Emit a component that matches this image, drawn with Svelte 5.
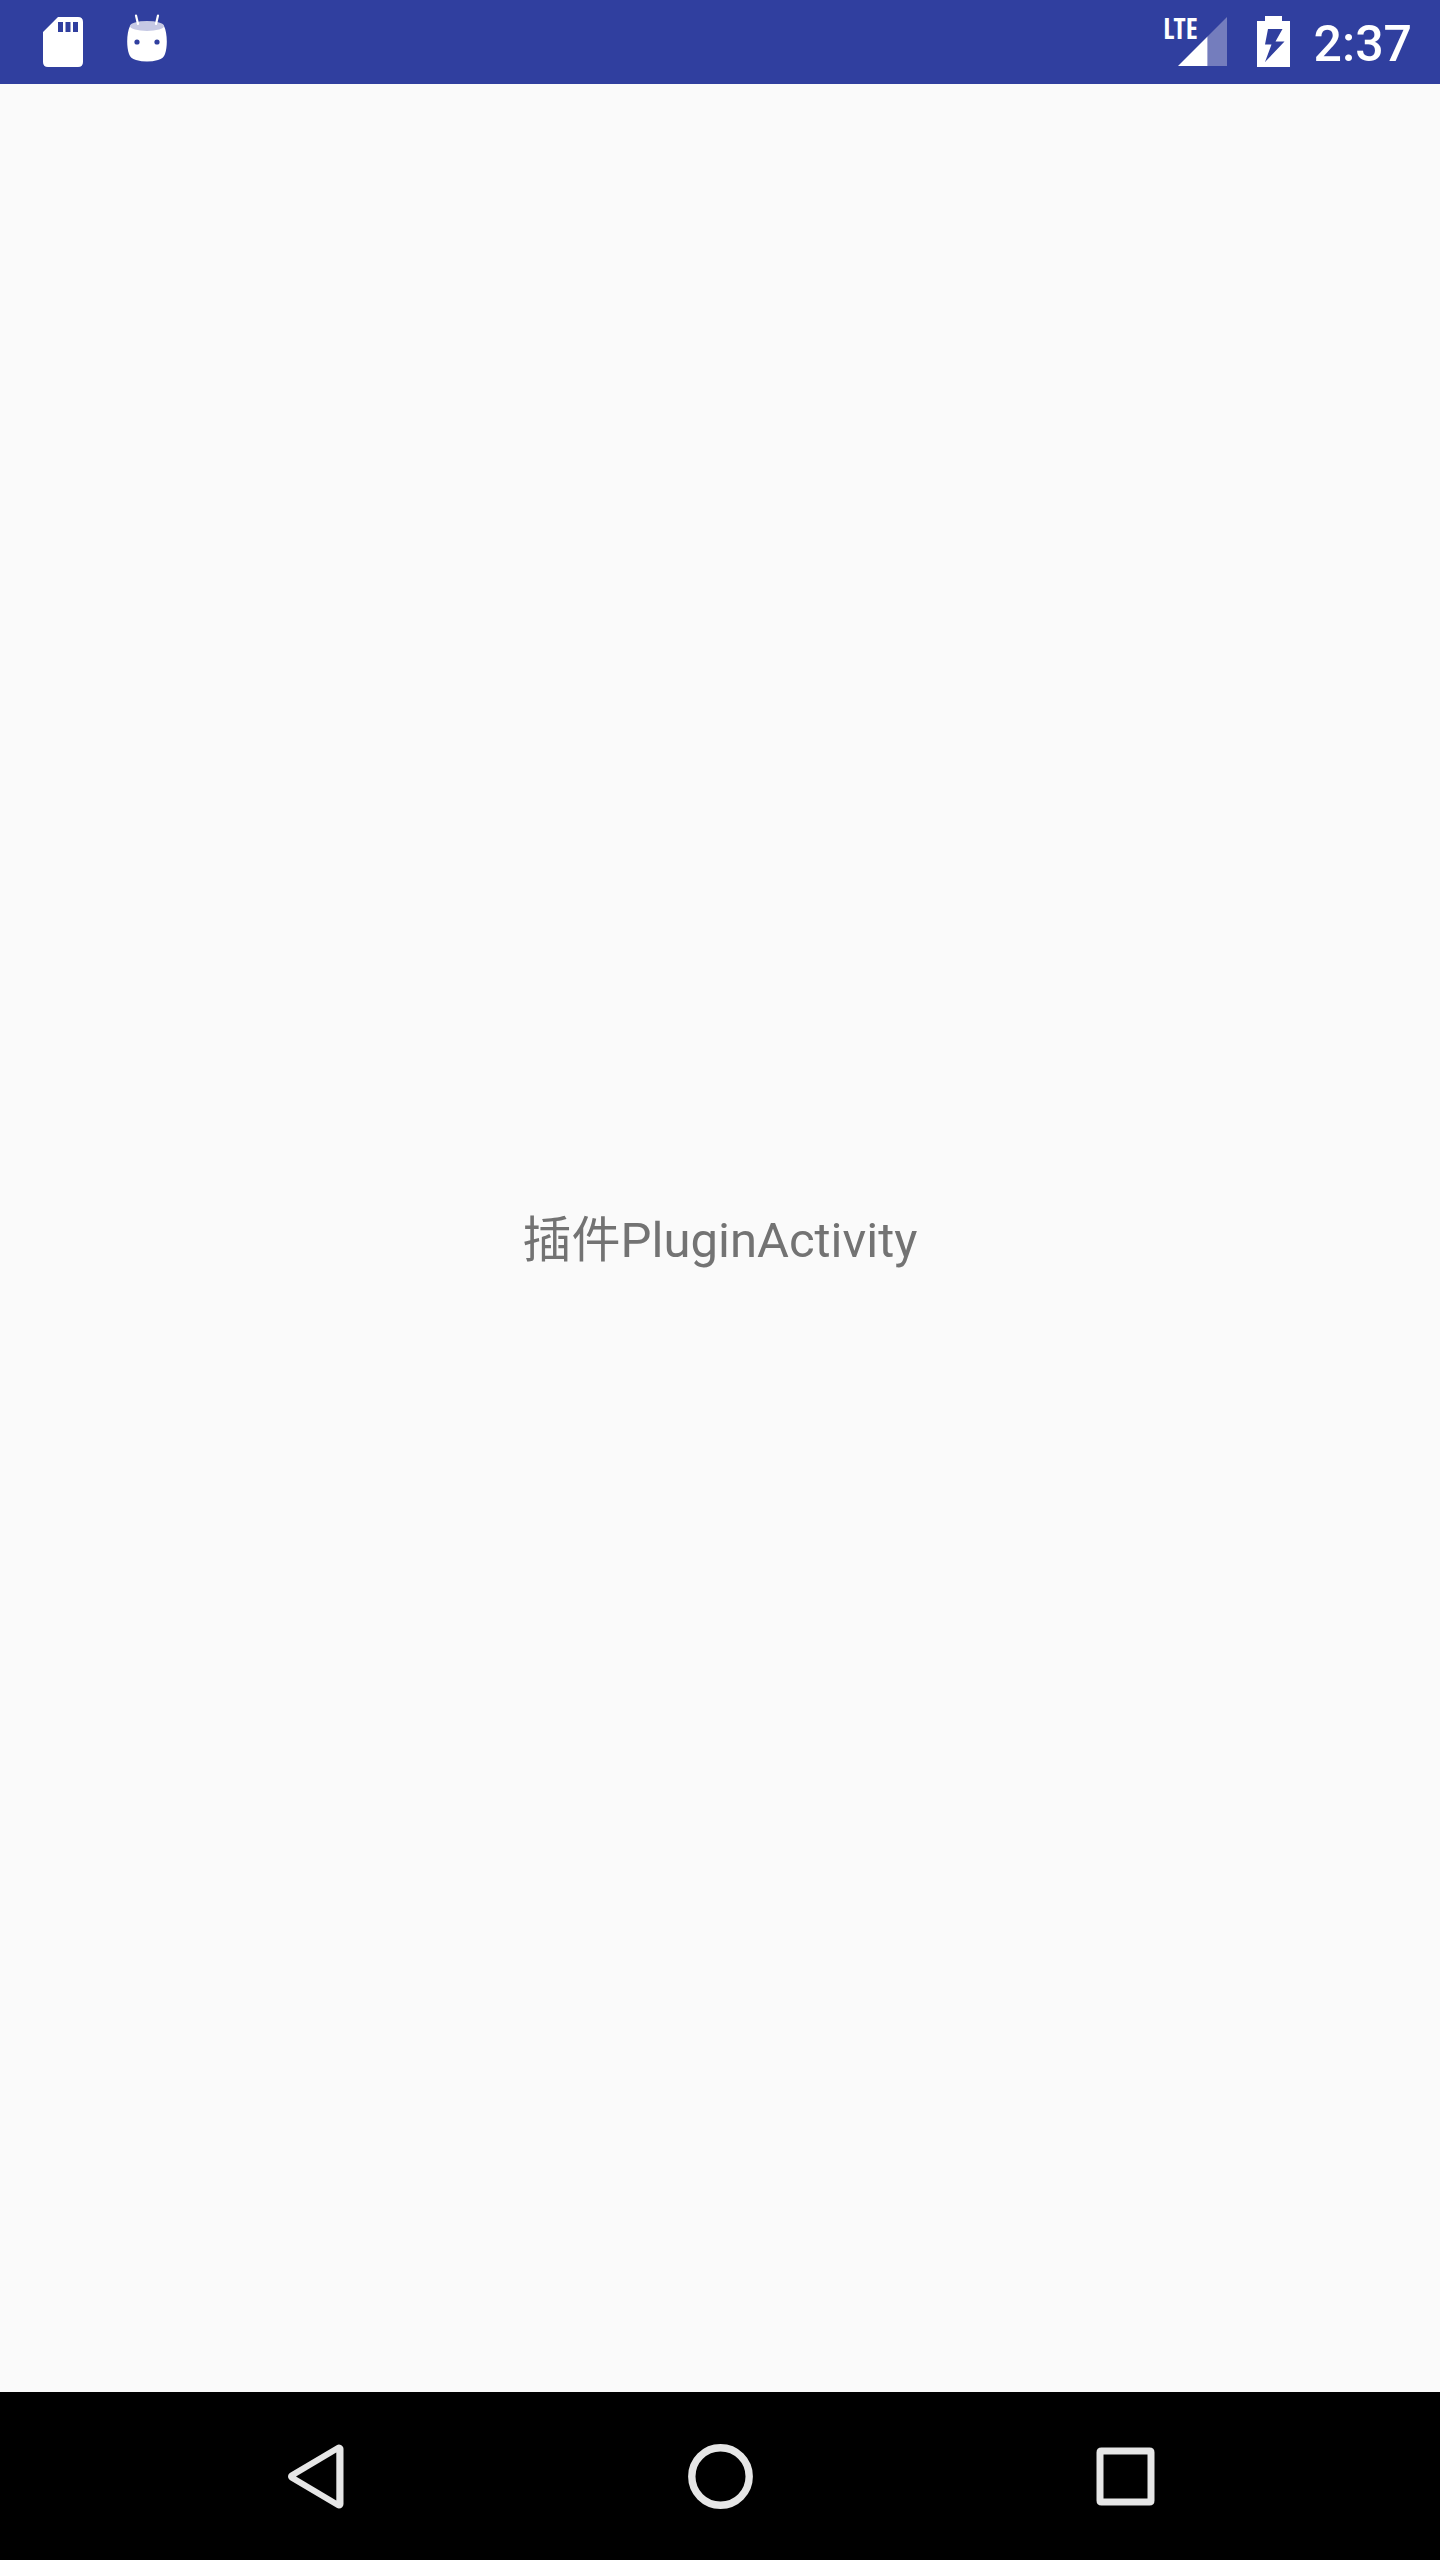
<script lang="ts">
  const time = '2:37';
  const message = '插件PluginActivity';
</script>

<div class="screen">
  <header class="status">
    <div class="group notifications">
      <svg class="sd" width="40" height="50" viewBox="0 0 40 50" role="img" aria-label="SD card">
        <path fill="#fff" fill-rule="evenodd" d="M15 0H35Q40 0 40 5V45Q40 50 35 50H5Q0 50 0 45V15ZM15 5V15H20V5ZM22.5 5V15H27.5V5ZM30 5V15H35V5Z" />
      </svg>
      <svg class="droid" width="40" height="48" viewBox="0 0 40 48" role="img" aria-label="Android">
        <path fill="#fff" d="M3 12C5 8 35 8 37 12C40 18 41 31 38 40C37 43 35 45 31 46Q20 49 9 46C5 45 3 43 2 40C-1 31 0 18 3 12Z" />
        <ellipse cx="20" cy="12" rx="17" ry="5" fill="#c6c9e4" />
        <path d="M9 1.5L11 10M31 1.5L29 10" fill="none" stroke="#fff" stroke-width="2.2" stroke-linecap="round" />
        <circle cx="10" cy="28" r="2.6" fill="#303f9f" />
        <circle cx="30" cy="28" r="2.6" fill="#303f9f" />
      </svg>
    </div>
    <div class="group system">
      <div class="signal">
        <svg width="49" height="49" viewBox="0 0 49 49" role="img" aria-label="Signal strength">
          <path d="M49 0V49H29.5V19.5Z" fill="#747dbd" />
          <path d="M29.5 19.5V49H0Z" fill="#fff" />
        </svg>
        <span class="network">LTE</span>
      </div>
      <svg class="battery" width="33" height="51" viewBox="0 0 33 51" role="img" aria-label="Battery charging">
        <path fill="#fff" fill-rule="evenodd" d="M8 0H25V5H33V51H0V5H8ZM11 13L8 28.5H14.5L8 46L27.5 25.5H18.5L25.5 13Z" />
      </svg>
      <time>{time}</time>
    </div>
  </header>

  <main><p>{message}</p></main>

  <nav aria-label="System navigation">
    <button type="button" aria-label="Back">
      <svg width="84" height="84" viewBox="0 0 84 84">
        <path d="M67 15V70L20.5 42.5Z" fill="#e6e6e6" stroke="#e6e6e6" stroke-width="9" stroke-linejoin="round" />
        <path d="M64.3 18.5V66.5L24 42.5Z" fill="#000" />
      </svg>
    </button>
    <button type="button" aria-label="Home">
      <svg width="84" height="84" viewBox="0 0 84 84">
        <circle cx="42.5" cy="42.5" r="28.7" fill="none" stroke="#e6e6e6" stroke-width="7.4" />
      </svg>
    </button>
    <button type="button" aria-label="Recent apps">
      <svg width="84" height="84" viewBox="0 0 84 84">
        <path fill="#e6e6e6" fill-rule="evenodd" d="M17.5 13.5H65.5Q70.5 13.5 70.5 18.5V66.5Q70.5 71.5 65.5 71.5H17.5Q12.5 71.5 12.5 66.5V18.5Q12.5 13.5 17.5 13.5ZM19.5 20.5V64.5H63.5V20.5Z" />
      </svg>
    </button>
  </nav>
</div>

<style>
  :global(body) {
    margin: 0;
  }
  .screen {
    display: flex;
    flex-direction: column;
    min-height: 100vh;
    background: #fafafa;
    font-family: Roboto, 'Noto Sans CJK SC', sans-serif;
  }
  svg {
    display: block;
    flex: none;
  }
  .status {
    display: flex;
    justify-content: space-between;
    box-sizing: border-box;
    height: 84px;
    padding: 0 28px 0 43px;
    background: #303f9f;
    color: #fff;
  }
  .group {
    display: flex;
    align-items: center;
  }
  .notifications {
    gap: 44px;
  }
  .droid {
    margin-bottom: 8px;
  }
  .signal {
    position: relative;
    margin: 0 30px 1px 0;
  }
  .network {
    position: absolute;
    top: -3px;
    right: 29px;
    font: bold 28px/28px 'Liberation Sans Narrow', 'Open Sans Condensed', Roboto, sans-serif;
  }
  .battery {
    margin: 0 24px 1px 0;
  }
  time {
    padding-top: 4px;
    font-size: 50px;
    font-weight: 500;
    line-height: 58px;
  }
  main {
    display: flex;
    flex: 1;
    align-items: center;
    justify-content: center;
    padding-top: 6px;
  }
  p {
    margin: 0;
    color: #737373;
    font-size: 49px;
    line-height: 66px;
  }
  nav {
    display: grid;
    grid-template-columns: repeat(3, 1fr);
    box-sizing: border-box;
    height: 168px;
    padding: 0 111px;
    background: #000;
  }
  button {
    display: flex;
    align-items: center;
    justify-content: center;
    padding: 0;
    border: 0;
    background: none;
    cursor: pointer;
  }
</style>
